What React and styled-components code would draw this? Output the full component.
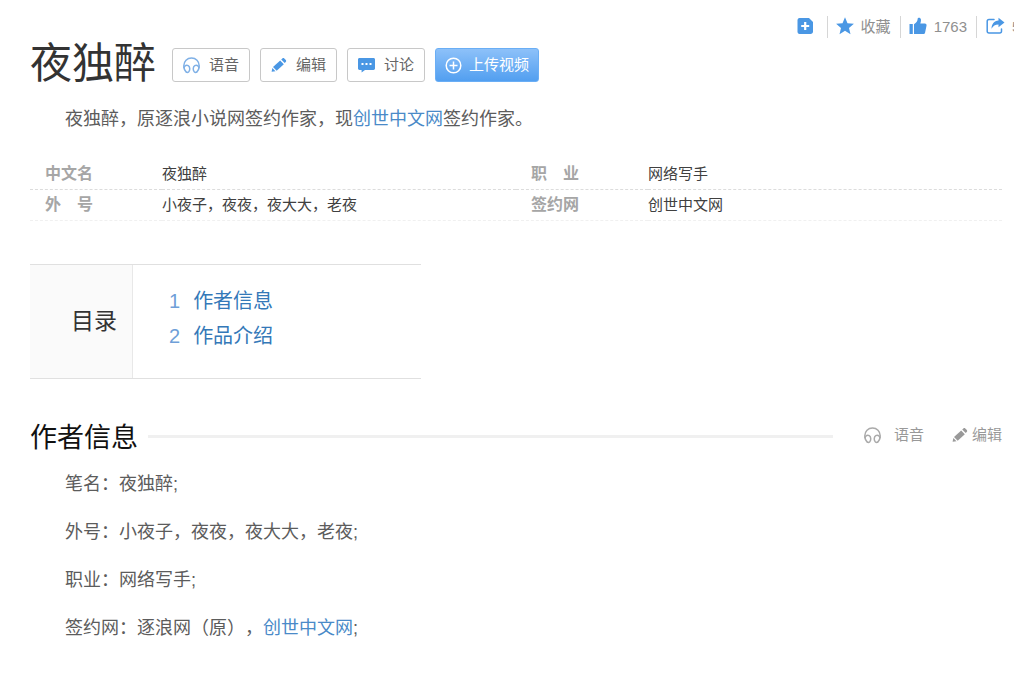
import React from 'react';
import styled, { createGlobalStyle } from 'styled-components'

const GlobalStyle = createGlobalStyle`
    *{box-sizing:border-box;}
    body{
        margin:0;background:#fff;color:#5c5c5c;
        font-family:"Liberation Sans","Noto Sans CJK SC",sans-serif;
        text-spacing-trim:space-all;
    }
    h1,h2,p,ol{margin:0;padding:0;font-weight:400;}
    a{color:#4a8ac8;text-decoration:none;}
    button{font-family:inherit;cursor:pointer;}
    svg{display:block;flex:none;}
`
const Page = styled.div`
    padding:16px 22px 32px 30px;
`
const TopBar = styled.div`
    display:flex;justify-content:flex-end;
    margin-right:-12px;height:22px;
`
const TopItem = styled.button`
    display:flex;align-items:center;gap:7px;
    height:22px;padding:0 9px 0 8px;
    border:0;border-left:1px solid ${props => props.$first ? 'transparent' : '#d6d6d6'};
    background:none;color:#909090;font-size:15px;line-height:22px;
    ${props => props.$first && 'padding-right:13px;'}
    ${props => props.$last && 'padding-left:9px;padding-right:0;'}
`
const Cut = styled.span`
    width:2px;overflow:hidden;
`
const TitleRow = styled.div`
    display:flex;align-items:center;gap:16px;height:52px;
`
const Title = styled.h1`
    font-size:42px;line-height:48px;color:#333;
`
const Buttons = styled.div`
    display:flex;gap:10px;padding-top:2px;
`
const Button = styled.button`
    display:flex;align-items:center;gap:9px;
    height:34px;padding:0 10px;
    border:1px solid #c8c8c8;border-radius:3px;
    background:#fff;color:#666;font-size:15px;line-height:22px;
    ${props => props.$primary && `
        gap:7px;padding:0 9px;border-color:#6aaef5;color:#fff;
        background:linear-gradient(#8dc1f9,#529ff0);
    `}
`
const Summary = styled.p`
    margin:15px 0 26px;padding-left:35px;
    font-size:18px;line-height:28px;
`
const InfoTable = styled.table`
    width:100%;table-layout:fixed;border-collapse:collapse;
    font-size:15px;line-height:30px;
    tr{border-bottom:1px dashed #dcdcdc;}
    tr:last-child{border-bottom:1px dashed #f0f0f0;}
    th{
        width:132px;padding:0 0 0 15px;text-align:left;
        font-size:16px;color:#a6a6a6;
    }
    td{padding:0;color:#404040;}
`
const Catalog = styled.nav`
    display:flex;width:391px;max-width:100%;height:115px;margin-top:43px;
    border-top:1px solid #e0e0e0;border-bottom:1px solid #e0e0e0;
`
const CatalogTitle = styled.h2`
    display:flex;align-items:center;justify-content:flex-end;
    width:103px;padding:0 15px 6px 0;
    border-right:1px solid #e8e8e8;background:#fafafa;
    color:#333;font-size:23px;
`
const CatalogList = styled.ol`
    padding:19px 0 0 36px;list-style:none;
    font-size:20px;line-height:35px;
`
const CatalogItem = styled.li`
    display:flex;gap:13px;color:#6f9fd8;
    a{color:#3478b8;}
`
const SectionHead = styled.div`
    display:flex;align-items:center;margin-top:38px;height:42px;
`
const SectionTitle = styled.h2`
    font-size:27px;line-height:42px;color:#111;
`
const Line = styled.div`
    flex:1;height:3px;margin:0 31px 4px 10px;background:#f0f0f0;
`
const SectionLink = styled.a`
    display:flex;align-items:center;gap:${props => props.$gap}px;
    margin-left:${props => props.$left || 0}px;padding-bottom:6px;
    color:#999;font-size:15px;line-height:22px;
`
const Text = styled.p`
    margin-bottom:20px;padding-left:35px;
    font-size:18px;line-height:28px;
`
const Content = styled.div`
    padding-top:11px;
`

const BLUE = '#4a97e4';

const Headphone = ({ color = '#7fb0e6', size = 17 }) => (
    <svg width={size} height={size} viewBox="0 0 17 17" fill="none" stroke={color} strokeWidth="1.5" strokeLinecap="round">
        <path d="M3.400 15.200C1.600 13.600.8 11.500.8 8.800.8 4.200 4.100 1 8.500 1s7.700 3.200 7.700 7.800c0 2.700-.8 4.800-2.600 6.400" />
        <path d="M1 10.500C1.700 8.500 3.700 7.800 5.200 8.700c1.800 1.100 2 4.200.8 5.700-.9 1-1.900 1.200-2.600.8" />
        <path d="M16 10.500c-.7-2-2.700-2.700-4.200-1.800-1.800 1.100-2 4.200-.8 5.700.9 1 1.900 1.200 2.600.8" />
    </svg>
)
const Pencil = ({ color = BLUE }) => (
    <svg width="16" height="16" viewBox="0 0 16 16" fill={color}>
        <path d="M.6 14.700l.7-3.700 3.200 3.200z" />
        <path d="M2 10l7.200-6.600 3.600 3.800-7.100 6.500z" />
        <path d="M10.200 2.500L11.400 1.400c.6-.5 1.300-.5 1.900.1l1.500 1.600c.5.600.5 1.300-.1 1.900l-1 1z" />
    </svg>
)
const Bubble = () => (
    <svg width="17" height="16" viewBox="0 0 17 16">
        <path fill={BLUE} d="M1.500 1h14c.8 0 1.500.6 1.500 1.400v9.200c0 .8-.7 1.400-1.500 1.400H7l-3.400 2.500V13H1.500C.7 13 0 12.400 0 11.600V2.400C0 1.600.7 1 1.500 1z" />
        <path fill="#fff" d="M3.500 6h2v2h-2zM7.500 6h2v2h-2zM11.500 6h2v2h-2z" />
    </svg>
)
const PlusCircle = () => (
    <svg width="17" height="17" viewBox="0 0 17 17" fill="none" stroke="#fff" strokeWidth="1.500">
        <circle cx="8.500" cy="8.500" r="7.300" />
        <path d="M8.500 4.500v8M4.500 8.500h8" />
    </svg>
)
const PlusPage = () => (
    <svg width="17" height="20" viewBox="0 0 17 20">
        <path fill={BLUE} d="M2.500 1H12l4 4v9.500c0 1.400-1 2.500-2.500 2.500h-11C1.200 17 .5 16 .5 14.500v-11C.5 2 1.200 1 2.500 1z" />
        <path stroke="#fff" strokeWidth="2.200" d="M8.200 5v8M4.200 9h8" />
    </svg>
)
const Star = () => (
    <svg width="18" height="20" viewBox="0 0 18 20" fill={BLUE}>
        <path d="M9 .3l2.500 5.900 6.400.5-4.900 4.200 1.500 6.300L9 13.800l-5.500 3.400L5 10.900.1 6.700l6.400-.5z" />
    </svg>
)
const Thumb = () => (
    <svg width="18" height="20" viewBox="0 0 18 20" fill={BLUE}>
        <path d="M.5 7h3.300v10H.5z" />
        <path d="M5 7.300C7.500 6 8.600 3.800 8.700 1.600 8.800.3 11.800.2 12 2.800c.1 1.200-.2 2.500-.7 3.700h4.500c1.400 0 2 1 1.700 2.200l-1.400 6.800c-.2 1-.9 1.500-1.900 1.500H5z" />
    </svg>
)
const Share = () => (
    <svg width="19" height="20" viewBox="0 0 19 20">
        <path fill="none" stroke={BLUE} strokeWidth="1.500" strokeLinecap="round" strokeLinejoin="round" d="M8 2.500H3C1.900 2.500 1.200 3.200 1.200 4.300v10c0 1.100.7 1.700 1.800 1.700h10.700c1.100 0 1.800-.6 1.800-1.700V12" />
        <path fill={BLUE} d="M12.500.8l6 4.700-6 4.700V7.400c-3.300 0-5.500 1.300-7 4.400.2-4.700 2.500-7.700 7-8.200z" />
    </svg>
)

const info = [
    ['中文名', '夜独醉', '职　业', '网络写手'],
    ['外　号', '小夜子，夜夜，夜大大，老夜', '签约网', '创世中文网'],
]

const App = () => {
    return(
        <>
            <GlobalStyle />
            <Page>
                <TopBar>
                    <TopItem $first aria-label="添加"><PlusPage /></TopItem>
                    <TopItem><Star />收藏</TopItem>
                    <TopItem><Thumb />1763</TopItem>
                    <TopItem $last><Share /><Cut>5</Cut></TopItem>
                </TopBar>
                <TitleRow>
                    <Title>夜独醉</Title>
                    <Buttons>
                        <Button><Headphone />语音</Button>
                        <Button><Pencil />编辑</Button>
                        <Button><Bubble />讨论</Button>
                        <Button $primary><PlusCircle />上传视频</Button>
                    </Buttons>
                </TitleRow>
                <Summary>夜独醉，原逐浪小说网签约作家，现<a href="#site">创世中文网</a>签约作家。</Summary>
                <InfoTable>
                    <tbody>
                        {info.map(([name1, value1, name2, value2]) => (
                            <tr key={name1}>
                                <th scope="row">{name1}</th>
                                <td>{value1}</td>
                                <th scope="row">{name2}</th>
                                <td>{value2}</td>
                            </tr>
                        ))}
                    </tbody>
                </InfoTable>
                <Catalog>
                    <CatalogTitle>目录</CatalogTitle>
                    <CatalogList>
                        <CatalogItem>1<a href="#author">作者信息</a></CatalogItem>
                        <CatalogItem>2<a href="#works">作品介绍</a></CatalogItem>
                    </CatalogList>
                </Catalog>
                <SectionHead id="author">
                    <SectionTitle>作者信息</SectionTitle>
                    <Line />
                    <SectionLink href="#voice" $gap={13}><Headphone color="#aaa" />语音</SectionLink>
                    <SectionLink href="#edit" $gap={4} $left={28}><Pencil color="#999" />编辑</SectionLink>
                </SectionHead>
                <Content>
                    <Text>笔名：夜独醉;</Text>
                    <Text>外号：小夜子，夜夜，夜大大，老夜;</Text>
                    <Text>职业：网络写手;</Text>
                    <Text>签约网：逐浪网（原），<a href="#site">创世中文网</a>;</Text>
                </Content>
            </Page>
        </>
    );
}

export default App;
